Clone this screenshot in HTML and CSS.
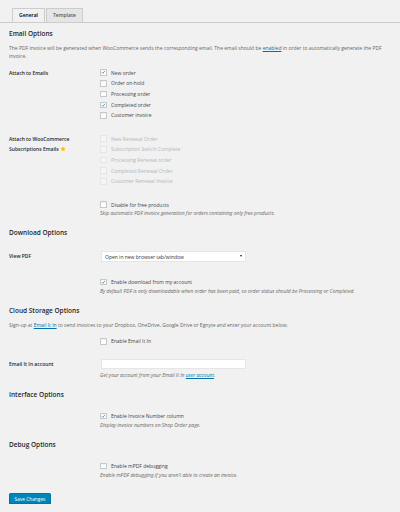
FILE: index.html
```html
<!doctype html>
<html>
<head>
  <title>PDF Invoice Settings</title>
  <link rel="stylesheet" href="styles.css">
</head>
<body>
  <div class="tabs">
    <div class="tab active">General</div>
    <div class="tab">Template</div>
  </div>

  <div class="wrap">
    <h2 class="first-title">Email Options</h2>
    <p class="lead"><span>The PDF invoice will be generated when WooCommerce sends the corresponding email. The email should be <a href="#">enabled</a> in order to automatically generate the PDF</span><br><span>invoice.</span></p>

    <div class="form-row after-lead">
      <div class="th">Attach to Emails</div>
      <div class="td">
        <div class="check"><span class="box checked"><svg viewBox="0 0 10 10"><polyline points="2,5.2 4.2,7.4 8.4,2.4"/></svg></span>New order</div>
        <div class="check"><span class="box"></span>Order on-hold</div>
        <div class="check"><span class="box"></span>Processing order</div>
        <div class="check"><span class="box checked"><svg viewBox="0 0 10 10"><polyline points="2,5.2 4.2,7.4 8.4,2.4"/></svg></span>Completed order</div>
        <div class="check"><span class="box"></span>Customer invoice</div>
      </div>
    </div>

    <div class="form-row">
      <div class="th"><span>Attach to WooCommerce</span><br><span>Subscriptions Emails</span> <svg class="star" viewBox="0 0 20 20"><polygon points="10,1 12.6,7 19,7.4 14,11.6 15.6,18 10,14.5 4.4,18 6,11.6 1,7.4 7.4,7"/></svg></div>
      <div class="td">
        <div class="check disabled"><span class="box"></span>New Renewal Order</div>
        <div class="check disabled"><span class="box"></span>Subscription Switch Complete</div>
        <div class="check disabled"><span class="box"></span>Processing Renewal order</div>
        <div class="check disabled"><span class="box"></span>Completed Renewal Order</div>
        <div class="check disabled"><span class="box"></span>Customer Renewal Invoice</div>
      </div>
    </div>

    <div class="form-row">
      <div class="th"></div>
      <div class="td">
        <div class="check"><span class="box"></span>Disable for free products</div>
        <div class="desc">Skip automatic PDF invoice generation for orders containing only free products.</div>
      </div>
    </div>

    <h2>Download Options</h2>

    <div class="form-row after-title wide">
      <div class="th field-label">View PDF</div>
      <div class="td">
        <div class="select">Open in new browser tab/window<span class="arrow"></span></div>
      </div>
    </div>

    <div class="form-row after-field">
      <div class="th"></div>
      <div class="td">
        <div class="check"><span class="box checked"><svg viewBox="0 0 10 10"><polyline points="2,5.2 4.2,7.4 8.4,2.4"/></svg></span>Enable download from my account</div>
        <div class="desc">By default PDF is only downloadable when order has been paid, so order status should be Processing or Completed.</div>
      </div>
    </div>

    <h2>Cloud Storage Options</h2>
    <p class="lead">Sign-up at <a href="#">Email It In</a> to send invoices to your Dropbox, OneDrive, Google Drive or Egnyte and enter your account below.</p>

    <div class="form-row after-lead">
      <div class="th"></div>
      <div class="td">
        <div class="check"><span class="box"></span>Enable Email It In</div>
      </div>
    </div>

    <div class="form-row">
      <div class="th input-label">Email It In account</div>
      <div class="td">
        <div class="input"></div>
        <div class="desc under-input">Get your account from your Email It In <a href="#">user account</a>.</div>
      </div>
    </div>

    <h2>Interface Options</h2>

    <div class="form-row after-title">
      <div class="th"></div>
      <div class="td">
        <div class="check"><span class="box checked"><svg viewBox="0 0 10 10"><polyline points="2,5.2 4.2,7.4 8.4,2.4"/></svg></span>Enable Invoice Number column</div>
        <div class="desc">Display invoice numbers on Shop Order page.</div>
      </div>
    </div>

    <h2>Debug Options</h2>

    <div class="form-row after-title">
      <div class="th"></div>
      <div class="td">
        <div class="check"><span class="box"></span>Enable mPDF debugging</div>
        <div class="desc">Enable mPDF debugging if you aren't able to create an invoice.</div>
      </div>
    </div>

    <div class="submit">
      <span class="button">Save Changes</span>
    </div>
  </div>
</body>
</html>
```

FILE: styles.css
```css
body {
  margin: 0;
  background: #f1f1f1;
  font-family: "Open Sans", sans-serif;
  font-size: 5px;
  color: #444;
}

a {
  color: #0073aa;
  text-decoration: underline;
}

/* Tabs */
.tabs {
  display: flex;
  align-items: flex-end;
  height: 14px;
  margin-top: 8px;
  padding-left: 12px;
  border-bottom: 1px solid #ccc;
}
.tab {
  box-sizing: border-box;
  height: 14px;
  line-height: 13px;
  padding: 0 6px;
  margin-right: 1px;
  border: 1px solid #ccc;
  border-bottom: 0;
  background: #e5e5e5;
  color: #555;
  font-weight: 600;
}
.tab.active {
  background: #f1f1f1;
  color: #000;
}

.wrap {
  padding: 0 6px 0 9px;
}

h2 {
  margin: 12px 0 0;
  font-size: 6.5px;
  line-height: 8px;
  font-weight: 600;
  color: #23282d;
}
h2.first-title {
  margin-top: 7px;
}

.lead {
  margin: 6px 0 0;
  line-height: 8px;
  color: #666;
}

/* Form rows */
.form-row {
  display: flex;
  margin-top: 12.5px;
}
.form-row.after-lead {
  margin-top: 7.4px;
}
.form-row.after-title {
  margin-top: 11.5px;
}
.form-row.wide {
  margin-top: 13.5px;
}
.form-row.after-field {
  margin-top: 14.5px;
}

.th {
  width: 91px;
  flex: none;
  padding-top: 2px;
  line-height: 9.7px;
  font-weight: 600;
  color: #23282d;
}
.th.field-label {
  padding-top: 1.5px;
  line-height: 8px;
}
.th.input-label {
  padding-top: 0.8px;
  line-height: 8px;
}
.td {
  flex: 1;
}

.star {
  width: 6px;
  height: 6px;
  vertical-align: -0.5px;
  fill: #ffb900;
}

/* Checkboxes */
.check {
  display: flex;
  align-items: center;
  height: 10.7px;
  color: #444;
}
.box {
  box-sizing: border-box;
  width: 6.5px;
  height: 6.5px;
  margin-right: 4.5px;
  border: 1px solid #c5c8cb;
  border-radius: 0.5px;
  background: #fff;
  box-shadow: inset 0 0.5px 1px rgba(0,0,0,.08);
}
.box svg {
  display: block;
  width: 100%;
  height: 100%;
}
.box polyline {
  fill: none;
  stroke: #1e8cbe;
  stroke-width: 1.9;
}
.check.disabled {
  color: #b4b7ba;
}
.check.disabled .box {
  border-color: #e4e5e6;
  background: #f5f5f5;
  box-shadow: none;
}

.desc {
  margin-top: -0.5px;
  line-height: 8px;
  font-style: italic;
  color: #666;
}
.desc.under-input {
  margin-top: 2px;
}

/* Fields */
.select {
  position: relative;
  box-sizing: border-box;
  width: 145px;
  height: 11px;
  margin-left: 1px;
  padding-left: 3px;
  line-height: 10px;
  background: #fff;
  border: 1px solid #e6e6e6;
  color: #32373c;
}
.select .arrow {
  position: absolute;
  right: 3px;
  top: 3.5px;
  border-left: 1.5px solid transparent;
  border-right: 1.5px solid transparent;
  border-top: 2px solid #222;
}
.input {
  box-sizing: border-box;
  width: 145px;
  height: 10px;
  margin-left: 1px;
  background: #fff;
  border: 1px solid #e6e6e6;
}

/* Submit */
.submit {
  margin-top: 14px;
}
.button {
  display: inline-block;
  box-sizing: border-box;
  width: 42px;
  height: 11.7px;
  line-height: 10px;
  text-align: center;
  background: #0085ba;
  border: 1px solid #0073aa;
  border-radius: 1.5px;
  box-shadow: 0 0.5px 0 #006799;
  color: #fff;
  font-size: 4.8px;
}
```
